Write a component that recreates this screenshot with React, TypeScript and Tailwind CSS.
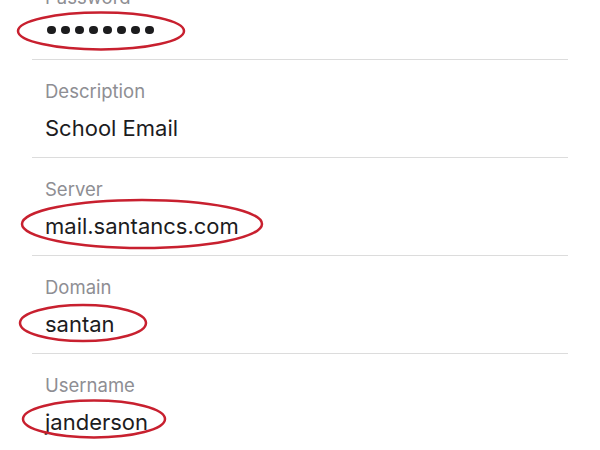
import React from "react";

type Row = { label: string; value: string; password?: boolean };

const rows: Row[] = [
  { label: "Password", value: "••••••••", password: true },
  { label: "Description", value: "School Email" },
  { label: "Server", value: "mail.santancs.com" },
  { label: "Domain", value: "santan" },
  { label: "Username", value: "janderson" },
];

const ellipses = [
  { cx: 101, cy: 31, rx: 83, ry: 18.5 },
  { cx: 142, cy: 224, rx: 120, ry: 24 },
  { cx: 83, cy: 323, rx: 63, ry: 18 },
  { cx: 94, cy: 419, rx: 71, ry: 18.5 },
];

export default function App() {
  return (
    <div
      className="relative w-[600px] h-[450px] overflow-hidden bg-white"
      style={{ fontFamily: "Inter, Roboto, 'Liberation Sans', sans-serif" }}
    >
      <div className="mt-[-38px] ml-[32px] w-[536px] flex flex-col">
        {rows.map((r) => (
          <div
            key={r.label}
            className={
              r.password
                ? "h-[98px] border-b border-[#dcdcdc] pl-[13px] pt-[23px] flex flex-col"
                : "h-[98px] border-b border-[#dcdcdc] pl-[13px] pt-[19px] flex flex-col"
            }
          >
            <div className="text-[18.5px] leading-[24px] text-[#8e8e93]">{r.label}</div>
            <div
              className={
                r.password
                  ? "mt-[8px] h-[26px] flex items-center text-[22px] leading-[26px] text-[#1c1c1e]"
                  : "mt-[12px] h-[26px] flex items-center text-[22px] leading-[26px] text-[#1c1c1e]"
              }
            >
              {r.password ? (
                <div className="flex gap-[5.5px] pl-[2px]" aria-label={r.value}>
                  {Array.from({ length: 8 }).map((_, i) => (
                    <span key={i} className="block w-[8.5px] h-[8.5px] rounded-full bg-[#1c1c1e]" />
                  ))}
                </div>
              ) : (
                r.value
              )}
            </div>
          </div>
        ))}
      </div>
      <svg className="absolute inset-0 pointer-events-none" width="600" height="450">
        {ellipses.map((e, i) => (
          <ellipse
            key={i}
            cx={e.cx}
            cy={e.cy}
            rx={e.rx}
            ry={e.ry}
            fill="none"
            stroke="#c8202f"
            strokeWidth="2.5"
          />
        ))}
      </svg>
    </div>
  );
}
